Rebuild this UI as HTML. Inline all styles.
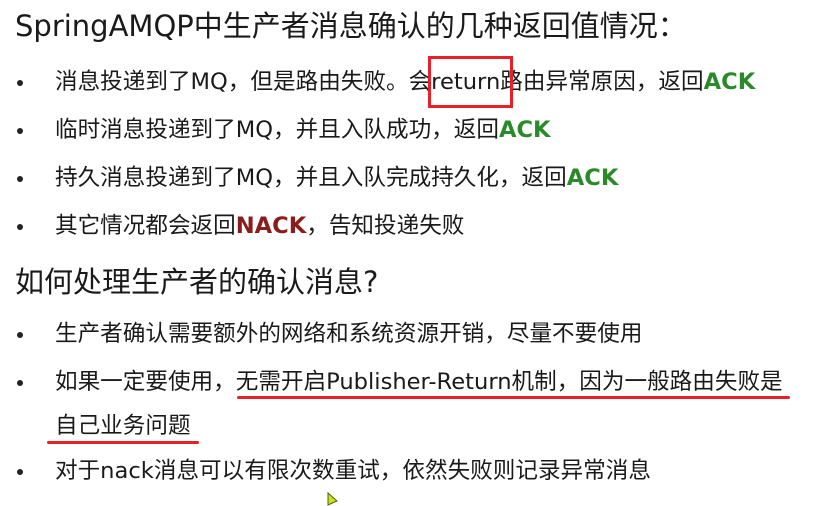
<!DOCTYPE html>
<html><head><meta charset="utf-8"><style>
body{margin:0;width:827px;height:504px;background:#fff;overflow:hidden;position:relative;font-family:"DejaVu Sans","Noto Sans CJK SC",sans-serif;color:#1a1a1a}
.t{position:absolute;left:15px;font-size:29px;white-space:nowrap;line-height:1}
.b{position:absolute;left:55px;font-size:22.6px;white-space:nowrap;line-height:1}
.d{position:absolute;left:17px;width:6px;height:6px;border-radius:50%;background:#222}
.g{color:#2a8a2a;font-weight:bold}
.r{color:#8b1c1c;font-weight:bold}
.box{position:absolute;left:428px;top:56px;width:79px;height:46px;border:3px solid #e8202a}
.u{position:absolute;height:3px;background:#e8202a;border-radius:2px}
</style></head><body>
<div class="t" style="top:12px">SpringAMQP中生产者消息确认的几种返回值情况：</div>
<div class="d" style="top:80px"></div><div class="b" style="top:71px">消息投递到了MQ，但是路由失败。会return路由异常原因，返回<span class="g">ACK</span></div>
<div class="d" style="top:128px"></div><div class="b" style="top:119px">临时消息投递到了MQ，并且入队成功，返回<span class="g">ACK</span></div>
<div class="d" style="top:176px"></div><div class="b" style="top:167px">持久消息投递到了MQ，并且入队完成持久化，返回<span class="g">ACK</span></div>
<div class="d" style="top:224px"></div><div class="b" style="top:215px">其它情况都会返回<span class="r">NACK</span>，告知投递失败</div>
<div class="box"></div>
<div class="t" style="top:268px">如何处理生产者的确认消息?</div>
<div class="d" style="top:332px"></div><div class="b" style="top:323px">生产者确认需要额外的网络和系统资源开销，尽量不要使用</div>
<div class="d" style="top:380px"></div><div class="b" style="top:371px">如果一定要使用，无需开启Publisher-Return机制，因为一般路由失败是</div>
<div class="b" style="top:415px">自己业务问题</div>
<div class="u" style="left:237px;top:396px;width:553px"></div>
<div class="u" style="left:47px;top:441px;width:152px"></div>
<div class="d" style="top:469px"></div><div class="b" style="top:460px">对于nack消息可以有限次数重试，依然失败则记录异常消息</div>
<svg style="position:absolute;left:327px;top:492px" width="12" height="14"><path d="M1 1 L1 13 L10 9 Z" fill="#c8e020" stroke="#556010" stroke-width="1"/></svg>
</body></html>
